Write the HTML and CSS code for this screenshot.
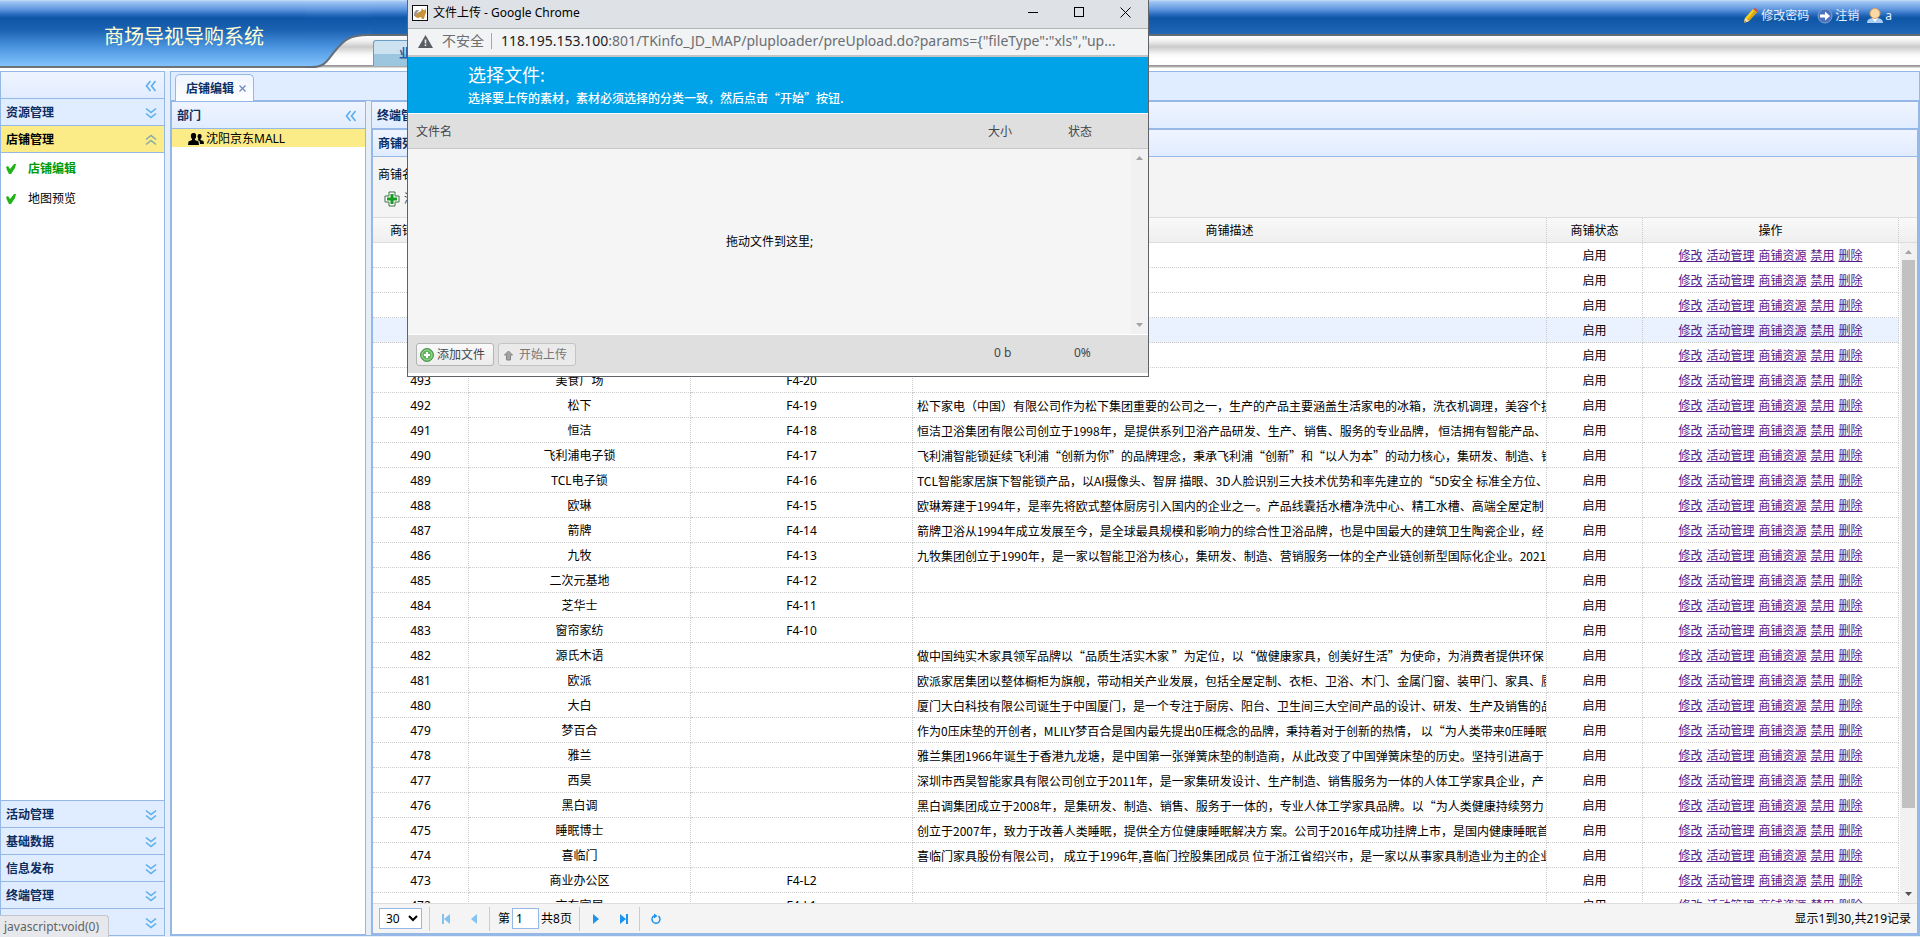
FILE: index.html
```html
<!DOCTYPE html>
<html lang="zh-CN">
<head>
<meta charset="utf-8">
<title>商场导视导购系统</title>
<link rel="stylesheet" href="styles.css">
</head>
<body>
<svg class="defs" aria-hidden="true">
  <symbol id="chev-down" viewBox="0 0 12 12"><path d="M1 1.5l5 4 5-4M1 6.5l5 4 5-4" fill="none" stroke="#5aaeee" stroke-width="1.6"/></symbol>
  <symbol id="chev-up" viewBox="0 0 12 12"><path d="M1 5.5l5-4 5 4M1 10.5l5-4 5 4" fill="none" stroke="#8aa9a0" stroke-width="1.6"/></symbol>
  <symbol id="chev-left" viewBox="0 0 12 12"><path d="M5.500 1l-4 5 4 5M10.500 1l-4 5 4 5" fill="none" stroke="#5aaeee" stroke-width="1.600"/></symbol>
  <symbol id="check" viewBox="0 0 10 10"><path d="M0 3l2-1 2 3 4-5 2 0-1 4-4 6H3L1 6z" fill="#1fb415"/></symbol>
</svg>

<header class="top">
  <h1 class="brand">商场导视导购系统</h1>
  <svg class="swoosh" viewBox="0 0 66 71">
    <defs>
      <linearGradient id="sky" x1="0" y1="0" x2="0" y2="66" gradientUnits="userSpaceOnUse">
        <stop offset="0" stop-color="#c5defa"/><stop offset=".03" stop-color="#9cc3f3"/><stop offset=".14" stop-color="#6299e0"/>
        <stop offset=".23" stop-color="#2468bb"/><stop offset=".28" stop-color="#0e56a6"/><stop offset=".45" stop-color="#1b62b1"/>
        <stop offset=".7" stop-color="#4892de"/><stop offset="1" stop-color="#81c2fb"/>
      </linearGradient>
    </defs>
    <path d="M0 0H66V35H62C44 35 38 40 29 51C22 59 20 67 6 67H0z" fill="url(#sky)"/>
    <path d="M0 67H6C20 67 22 59 29 51C38 40 44 35 62 35H66" fill="none" stroke="#666d78" stroke-width="2"/>
  </svg>
  <nav class="modules"><a href="#" class="module">业务管理</a></nav>
  <div class="user-tools">
    <a href="#"><svg width="16" height="16" viewBox="0 0 16 16"><path d="M1 15l1-5L10 1l4 3L6 13z" fill="#f5d21d"/><path d="M4 12L12 2l2 2L6 13z" fill="#dba514"/><path d="M10 1l2-1 3 2-1 2z" fill="#d9534a"/><path d="M1 15l1-5 4 3z" fill="#f4dcb2"/><path d="M1 15l1-2 1 1z" fill="#333"/></svg>修改密码</a>
    <a href="#"><svg width="16" height="16" viewBox="0 0 16 16"><circle cx="8" cy="8" r="7" fill="#4d72bd" stroke="#7d9dd4"/><path d="M3 6.500h5V3.500L13 8l-5 4.500v-3H3z" fill="#fff"/></svg>注销</a>
    <span class="who"><svg width="16" height="16" viewBox="0 0 16 16"><path d="M0 15c0-4 3-5 8-5s8 1 8 5z" fill="#a9cdf5"/><path d="M5 10l3 4 3-4z" fill="#fff"/><circle cx="8" cy="5.500" r="5" fill="#fbd9a5" stroke="#e0a15c"/></svg>a</span>
  </div>
</header>

<div class="workspace">
  <aside class="menu">
    <div class="bar bar-head"><button class="icon-btn" aria-label="折叠"><svg><use href="#chev-left"/></svg></button></div>
    <button class="bar">资源管理<svg><use href="#chev-down"/></svg></button>
    <button class="bar active">店铺管理<svg><use href="#chev-up"/></svg></button>
    <ul class="links">
      <li><a href="#" class="current"><svg><use href="#check"/></svg>店铺编辑</a></li>
      <li><a href="#"><svg><use href="#check"/></svg>地图预览</a></li>
    </ul>
    <button class="bar">活动管理<svg><use href="#chev-down"/></svg></button>
    <button class="bar">基础数据<svg><use href="#chev-down"/></svg></button>
    <button class="bar">信息发布<svg><use href="#chev-down"/></svg></button>
    <button class="bar">终端管理<svg><use href="#chev-down"/></svg></button>
    <button class="bar bar-last" aria-label="系统管理"><svg><use href="#chev-down"/></svg></button>
  </aside>

  <main class="center">
    <div class="tabs"><div class="tab">店铺编辑<button class="tab-close" aria-label="关闭"><svg width="7" height="7" viewBox="0 0 7 7"><path d="M.5.5l6 6M6.500.5l-6 6" stroke="#6f8cb8" stroke-width="1.300"/></svg></button></div></div>
    <div class="split">
      <section class="dept">
        <h2 class="panel-head">部门<button class="icon-btn" aria-label="折叠"><svg><use href="#chev-left"/></svg></button></h2>
        <div class="node"><svg width="16" height="12" viewBox="0 0 16 12"><path d="M5.500 0C8 0 8.500 2 8 4.500L7 6v1l3.500 1.500.5 3.500H0l.5-3.500L4 7V6L3 4.500C2.500 2 3 0 5.500 0z"/><path d="M11.500 1c2 0 2.500 1.500 2 3.500l-1 1.500v1l3 1 .5 3h-4l-.5-3-2-1 1-1-.8-1.500C9.400 3 9.500 1 11.500 1z"/></svg>沈阳京东MALL</div>
      </section>
      <section class="terminal">
        <h2 class="panel-head">终端管理</h2>
        <div class="grid-panel">
          <h3 class="panel-head">商铺列表</h3>
          <div class="toolbar">
            <div class="field">商铺名称</div>
            <button class="add"><svg width="16" height="16" viewBox="0 0 16 16"><path d="M5 1h6v4h4v6h-4v4H5v-4H1V5h4z" fill="#fff" stroke="#3f6f46" stroke-linejoin="round"/><path d="M6.500 3h3v3.500H13v3H9.500V13h-3V9.500H3v-3h3.500z" fill="#169c22"/></svg>添加</button>
          </div>
          <table class="grid head">
            <colgroup><col class="c-id"><col class="c-name"><col class="c-pos"><col><col class="c-state"><col class="c-ops"><col class="c-scroll"></colgroup>
            <thead><tr><th>商铺编号ID</th><th>商铺名称</th><th>商铺位置</th><th>商铺描述</th><th>商铺状态</th><th>操作</th><th></th></tr></thead>
          </table>
          <div class="grid-body">
            <div class="rows">
              <table class="grid">
                <colgroup><col class="c-id"><col class="c-name"><col class="c-pos"><col><col class="c-state"><col class="c-ops"></colgroup>
                <tbody id="shops"></tbody>
              </table>
            </div>
            <div class="scroll"><i class="up"></i><b class="thumb"></b><i class="down"></i></div>
          </div>
          <footer class="pager">
            <select class="size" aria-label="每页条数"><option>30</option></select>
            <i class="sep"></i>
            <button aria-label="首页" disabled><svg viewBox="0 0 10 10"><path d="M1 0h2v10H1zM9 0v10L3 5z" fill="#84c3f0"/></svg></button>
            <button aria-label="上一页" disabled><svg viewBox="0 0 10 10"><path d="M8 0v10L2 5z" fill="#84c3f0"/></svg></button>
            <i class="sep"></i>
            <label class="page">第<input value="1"></label><span class="total">共8页</span>
            <i class="sep"></i>
            <button aria-label="下一页"><svg viewBox="0 0 10 10"><path d="M2 0v10l6-5z" fill="#1c93ec"/></svg></button>
            <button aria-label="末页"><svg viewBox="0 0 10 10"><path d="M1 0v10l6-5zM7 0h2v10H7z" fill="#1c93ec"/></svg></button>
            <i class="sep"></i>
            <button aria-label="刷新"><svg viewBox="0 0 10 10"><path d="M7.500 2.200A4 4 0 1 1 3 1.800" fill="none" stroke="#1c93ec" stroke-width="1.500"/><path d="M3-.5v5L6.500 2z" fill="#1c93ec"/></svg></button>
            <span class="summary">显示1到30,共219记录</span>
          </footer>
        </div>
      </section>
    </div>
  </main>
</div>

<div class="status">javascript:void(0)</div>

<div class="window" role="dialog" aria-label="文件上传">
  <div class="titlebar">
    <svg width="16" height="16" viewBox="0 0 16 16"><rect x=".5" y=".5" width="15" height="15" fill="#fff" stroke="#111"/><path d="M7 7l2-1 1-3 1 2h2l1-2v5l-1 2-1 4h-2l-1-2-3 1-3-1 1-3z" fill="#c9923c"/><path d="M2 8l2-3 3 0-2 3-1 3H2z" fill="#999"/></svg>
    <span class="win-title">文件上传 - Google Chrome</span>
    <button aria-label="最小化"><svg width="11" height="11"><path d="M0 5.500h10" stroke="#000"/></svg></button>
    <button aria-label="最大化"><svg width="11" height="11"><rect x=".5" y=".5" width="9" height="9" fill="none" stroke="#000"/></svg></button>
    <button aria-label="关闭"><svg width="11" height="11"><path d="M.5.5l10 10M10.500.5l-10 10" stroke="#000"/></svg></button>
  </div>
  <div class="address">
    <svg width="15" height="13" viewBox="0 0 15 13"><path d="M7.500 0L15 13H0z" fill="#5a5e63"/><path d="M6.700 4.500h1.600v4H6.700zM6.700 9.500h1.600V11H6.700z" fill="#f1f3f4"/></svg>
    <span class="insecure">不安全</span>
    <span class="url"><b>118.195.153.100</b>:801/TKinfo_JD_MAP/pluploader/preUpload.do?params={"fileType":"xls","up...</span>
  </div>
  <div class="banner"><h2>选择文件:</h2><p>选择要上传的素材，素材必须选择的分类一致，然后点击“开始”按钮.</p></div>
  <div class="files-row files-head"><span class="f-name">文件名</span><span class="f-size">大小</span><span class="f-state">状态</span></div>
  <div class="drop"><div class="drop-text">拖动文件到这里;</div><div class="scroll pale"><i class="up"></i><i class="down"></i></div></div>
  <div class="files-row files-foot">
    <div class="f-name">
      <button class="btn"><svg width="14" height="14" viewBox="0 0 14 14"><circle cx="7" cy="7" r="6.400" fill="#5fb45c" stroke="#3d8d42"/><circle cx="7" cy="7" r="5" fill="none" stroke="#a6d99f"/><path d="M6 4h2v2h2v2H8v2H6V8H4V6h2z" fill="#fff"/></svg>添加文件</button>
      <button class="btn off" disabled><svg width="14" height="14" viewBox="0 0 14 14"><path d="M6.500 3l4 4H8.500v5h-4V7H2.500z" fill="#a3a3a3" stroke="#868686"/></svg>开始上传</button>
    </div>
    <span class="f-size">0 b</span><span class="f-state">0%</span>
  </div>
</div>
<script src="app.js"></script>
</body>
</html>
```
FILE: styles.css
```css
* { box-sizing: border-box; }
html, body { height: 100%; }
body {
  margin: 0; overflow: hidden; display: flex; flex-direction: column;
  padding-bottom: 1px; background: #e6eef8; color: #000;
  font: 12px/16px "Noto Sans", "Noto Sans CJK SC", sans-serif;
}
h1, h2, h3, p, ul { margin: 0; padding: 0; }
button { font: inherit; color: inherit; border: 0; padding: 0; background: none; }
svg { display: block; flex: none; }
.defs { position: absolute; width: 0; height: 0; }

.top {
  display: flex; height: 71px; flex: none;
  background: linear-gradient(#c5defa 0, #9cc3f3 2px, #6299e0 9px, #2468bb 15px, #0e56a6 18px, #1b62b1 30px, #2468b5 34px,
    #5f6670 34px, #6a6f76 36px, #fff 36px, #f0f0f0 41px, #cbcbcb 47px, #f6f6f6 54px, #fff 58px, #fff 65px, #8f8f8f 65px, #b5b5b5 67px, #fff 68px);
}
.brand {
  width: 306px; padding-left: 104px; font-size: 20px; font-weight: 400; line-height: 74px; color: #ffffd6;
  background: linear-gradient(#c5defa 0, #9cc3f3 2px, #6299e0 9px, #2468bb 15px, #0e56a6 18px, #1b62b1 30px, #4892de 46px, #81c2fb 66px,
    #666d78 66px, #777 68px, #fff 68px);
}
.swoosh { width: 66px; height: 71px; }
.modules { padding: 40px 0 5px 1px; display: flex; flex: 1; }
.module {
  width: 100px; padding-top: 5px; text-align: center; text-decoration: none; font-weight: 700; color: #1d5fa8;
  border: 1px solid #6c9cc0; border-bottom: 0; border-radius: 3px 3px 0 0; background: linear-gradient(#cde2f0 50%, #9cc5e0 50%);
}
.user-tools { display: flex; gap: 8px; padding: 7px 28px 0 0; height: 24px; color: #e4efff; }
.user-tools a, .who { display: flex; align-items: center; gap: 2px; color: inherit; text-decoration: none; }

.workspace { flex: 1; min-height: 0; display: flex; gap: 5px; }
.menu { width: 165px; display: flex; flex-direction: column; border: 1px solid #95b8e7; background: #fff; }
.bar {
  height: 27px; flex: none; display: flex; align-items: center; justify-content: space-between; padding: 1px 7px 0 5px;
  border-bottom: 1px solid #95b8e7; background: #e0ecff; color: #0e2d5f; font-weight: 700; text-align: left;
}
.bar svg, .icon-btn svg { width: 12px; height: 12px; }
.bar-head, .bar-last { justify-content: flex-end; }
.bar-head { background: linear-gradient(#eff5ff, #e0ecff); }
.bar-last { height: 26px; border-bottom: 0; }
.bar.active { background: #fbec88; color: #000; }
.links { flex: 1; list-style: none; border-bottom: 1px solid #95b8e7; padding-top: 1px; }
.links a { display: flex; align-items: center; gap: 12px; height: 30px; padding-left: 5px; color: #000; text-decoration: none; }
.links svg { width: 10px; height: 10px; }
.links .current { color: #009a00; font-weight: 700; }

.center { flex: 1; min-width: 0; display: flex; flex-direction: column; border: 1px solid #95b8e7; }
.tabs { height: 29px; flex: none; padding: 2px 0 0 4px; display: flex; background: #e0ecff; border-bottom: 1px solid #95b8e7; }
.tab {
  height: 28px; display: flex; align-items: center; gap: 5px; padding: 0 7px 0 10px; color: #0e2d5f; font-weight: 700;
  border: 1px solid #95b8e7; border-bottom: 0; border-radius: 5px 5px 0 0; background: linear-gradient(#eff5ff, #fff);
}
.split { flex: 1; min-height: 0; display: flex; gap: 5px; background: #e6eef8; }
.dept { width: 195px; border: 1px solid #95b8e7; background: #fff; }
.panel-head {
  height: 27px; flex: none; display: flex; align-items: center; justify-content: space-between; padding: 1px 8px 0 5px;
  font-size: 12px; font-weight: 700; color: #0e2d5f; border-bottom: 1px solid #95b8e7; background: linear-gradient(#eff5ff, #e0ecff);
}
.node { height: 18px; display: flex; align-items: center; gap: 2px; padding: 1px 0 0 16px; background: #fbec88; }
.terminal { flex: 1; min-width: 0; display: flex; flex-direction: column; border: 1px solid #95b8e7; }
.grid-panel { flex: 1; min-height: 0; display: flex; flex-direction: column; border: 1px solid #95b8e7; background: #fff; }
.toolbar { height: 61px; flex: none; padding: 10px 5px; background: #f4f4f4; border-bottom: 1px solid #ddd; }
.field { height: 16px; }
.add { display: flex; gap: 4px; padding: 8px 0 0 6px; color: #444; }

.grid { width: 100%; table-layout: fixed; border-collapse: separate; border-spacing: 0; }
.c-id, .c-state { width: 96px; }
.c-name, .c-pos { width: 222px; }
.c-ops { width: 256px; }
.c-scroll { width: 18px; }
.head { flex: none; }
.grid th, .grid td {
  height: 25px; padding: 2px 4px 0; line-height: 16px; text-align: center; white-space: nowrap; overflow: hidden;
  border-right: 1px dotted #ccc; border-bottom: 1px dotted #ccc;
}
.grid th { font-weight: 400; border-bottom: 1px solid #ddd; background: linear-gradient(#f9f9f9, #efefef); }
.grid th:last-child { border-right: 0; }
.grid td.desc { text-align: left; padding-right: 0; font-family: "Noto Sans CJK SC", sans-serif; }
.grid tr.hover td { background: #eaf2ff; }
.grid a { color: #551a8b; }
.grid a + a { margin-left: 4px; }
.grid-body { flex: 1; min-height: 0; display: flex; gap: 1px; }
.rows { flex: 1; min-width: 0; overflow: hidden; }
.scroll { width: 17px; flex: none; display: flex; flex-direction: column; align-items: center; background: #f1f1f1; }
.scroll i { width: 7px; height: 4px; margin: 7px 0 6px; background: #a3a3a3; clip-path: polygon(50% 0, 100% 100%, 0 100%); }
.scroll .down { margin: auto 0 7px; background: #505050; clip-path: polygon(0 0, 100% 0, 50% 100%); }
.scroll.pale .down { background: #a3a3a3; }
.thumb { width: 13px; height: 83%; background: #c1c1c1; }

.pager { height: 30px; flex: none; display: flex; align-items: center; padding: 0 6px; background: #f4f4f4; border-top: 1px solid #ddd; }
.size { width: 43px; height: 21px; margin-right: 7px; padding: 0 0 0 2px; font: inherit; border: 1px solid #95b8e7; background: #fff; }
.sep { width: 1px; height: 24px; background: #ccc; }
.pager button { width: 28px; height: 24px; display: flex; align-items: center; justify-content: center; }
.pager button svg { width: 10px; height: 10px; overflow: visible; }
.sep + button { margin-left: 2px; }
.pager button + .sep { margin-left: 1px; }
.page { display: flex; align-items: center; margin-left: 8px; gap: 2px; }
.page input { width: 27px; height: 21px; padding: 0 3px; font: inherit; border: 1px solid #95b8e7; }
.total { margin: 0 7px 0 2px; }
.total, .summary { padding-top: 1px; }
.summary { margin-left: auto; }

.status {
  position: absolute; left: 0; bottom: 0; height: 22px; width: 109px; padding: 3px 4px; color: #5f6368;
  background: #e6e8eb; border: 1px solid #c3c6cc; border-width: 1px 1px 0 0; border-radius: 0 4px 0 0; white-space: nowrap;
}

.window {
  position: absolute; left: 407px; top: 0; width: 742px; border: 1px solid #5f6368; border-top: 0;
  padding-bottom: 3px; background: #fff; display: flex; flex-direction: column;
}
.titlebar { height: 29px; padding: 0 0 3px 4px; display: flex; align-items: center; background: #dee1e6; border-bottom: 1px solid #b4b4b4; }
.win-title { flex: 1; padding-left: 5px; }
.titlebar button { width: 46px; height: 22px; display: flex; align-items: center; justify-content: center; }
.address {
  height: 28px; padding: 0 17px 2px 10px; display: flex; align-items: center; gap: 9px; font-size: 14px; color: #6b6e72;
  background: #f1f3f4; border-bottom: 2px solid #c4c4c4; white-space: nowrap;
}
.insecure { padding-right: 7px; border-right: 1px solid #a8a8a8; }
.url { line-height: 20px; }
.url b { font-weight: 400; color: #202124; }
.banner { height: 57px; padding: 6px 0 0 60px; color: #fff; background: #00a2e8; border-bottom: 1px solid #fff; }
.banner h2 { font-size: 18px; line-height: 24px; font-weight: 400; }
.banner p { padding-top: 3px; font-family: "Noto Sans CJK SC", sans-serif; font-weight: 500; }
.files-row { display: flex; align-items: center; padding: 0 8px; color: #42454a; background: #dfdfdf; }
.files-head { height: 35px; padding-top: 2px; border-bottom: 1px solid #c8c8c8; }
.f-name { flex: 1; }
.f-size { width: 80px; }
.f-state { width: 72px; }
.files-foot .f-size, .files-foot .f-state { padding: 2px 0 0 6px; }
.drop { height: 186px; display: flex; background: #f5f5f5; border-bottom: 1px solid #fff; }
.drop-text { flex: 1; text-align: center; padding-top: 85px; }
.files-foot { height: 38px; align-items: flex-start; padding-top: 8px; }
.files-foot div { display: flex; gap: 4px; }
.btn {
  width: 78px; height: 23px; padding-left: 3px; display: flex; align-items: center; gap: 3px;
  border: 1px solid #b4b4b4; border-radius: 3px; background: linear-gradient(#fafafa, #ececec);
}
.btn.off { color: #777; border-color: #c4c4c4; background: #eaeaea; }
```
FILE: app.js
```js
const shops = [
  [498], [497], [496], [495], [494],
  [493, "美食广场", "F4-20"],
  [492, "松下", "F4-19", "松下家电（中国）有限公司作为松下集团重要的公司之一，生产的产品主要涵盖生活家电的冰箱，洗衣机调理，美容个护"],
  [491, "恒洁", "F4-18", "恒洁卫浴集团有限公司创立于1998年，是提供系列卫浴产品研发、生产、销售、服务的专业品牌， 恒洁拥有智能产品、"],
  [490, "飞利浦电子锁", "F4-17", "飞利浦智能锁延续飞利浦“创新为你”的品牌理念，秉承飞利浦“创新”和“以人为本”的动力核心，集研发、制造、销售"],
  [489, "TCL电子锁", "F4-16", "TCL智能家居旗下智能锁产品，以AI摄像头、智屏 描眼、3D人脸识别三大技术优势和率先建立的“5D安全 标准全方位、"],
  [488, "欧琳", "F4-15", "欧琳筹建于1994年，是率先将欧式整体厨房引入国内的企业之一。产品线囊括水槽净洗中心、精工水槽、高端全屋定制"],
  [487, "箭牌", "F4-14", "箭牌卫浴从1994年成立发展至今，是全球最具规模和影响力的综合性卫浴品牌，也是中国最大的建筑卫生陶瓷企业，经"],
  [486, "九牧", "F4-13", "九牧集团创立于1990年，是一家以智能卫浴为核心，集研发、制造、营销服务一体的全产业链创新型国际化企业。2021"],
  [485, "二次元基地", "F4-12"],
  [484, "芝华士", "F4-11"],
  [483, "窗帘家纺", "F4-10"],
  [482, "源氏木语", "", "做中国纯实木家具领军品牌以“品质生活实木家 ”为定位，以“做健康家具，创美好生活”为使命，为消费者提供环保"],
  [481, "欧派", "", "欧派家居集团以整体橱柜为旗舰，带动相关产业发展，包括全屋定制、衣柜、卫浴、木门、金属门窗、装甲门、家具、厨"],
  [480, "大白", "", "厦门大白科技有限公司诞生于中国厦门，是一个专注于厨房、阳台、卫生间三大空间产品的设计、研发、生产及销售的品"],
  [479, "梦百合", "", "作为0压床垫的开创者，MLILY梦百合是国内最先提出0压概念的品牌，秉持着对于创新的热情， 以“为人类带来0压睡眠"],
  [478, "雅兰", "", "雅兰集团1966年诞生于香港九龙塘，是中国第一张弹簧床垫的制造商，从此改变了中国弹簧床垫的历史。坚持引进高于"],
  [477, "西昊", "", "深圳市西昊智能家具有限公司创立于2011年，是一家集研发设计、生产制造、销售服务为一体的人体工学家具企业，产"],
  [476, "黑白调", "", "黑白调集团成立于2008年，是集研发、制造、销售、服务于一体的，专业人体工学家具品牌。以“为人类健康持续努力"],
  [475, "睡眠博士", "", "创立于2007年，致力于改善人类睡眠，提供全方位健康睡眠解决方 案。公司于2016年成功挂牌上市，是国内健康睡眠首"],
  [474, "喜临门", "", "喜临门家具股份有限公司， 成立于1996年,喜临门控股集团成员 位于浙江省绍兴市，是一家以从事家具制造业为主的企业"],
  [473, "商业办公区", "F4-L2"],
  [472, "京东家居", "F4-L1"]
];
const actions = ["修改", "活动管理", "商铺资源", "禁用", "删除"]
  .map(name => `<a href="#">${name}</a>`).join("");
document.getElementById("shops").innerHTML = shops.map(([id, name = "", pos = "", desc = ""], i) =>
  `<tr${i === 3 ? ' class="hover"' : ""}><td>${id}</td><td>${name}</td><td>${pos}</td>` +
  `<td class="desc">${desc}</td><td>启用</td><td>${actions}</td></tr>`).join("");
```
